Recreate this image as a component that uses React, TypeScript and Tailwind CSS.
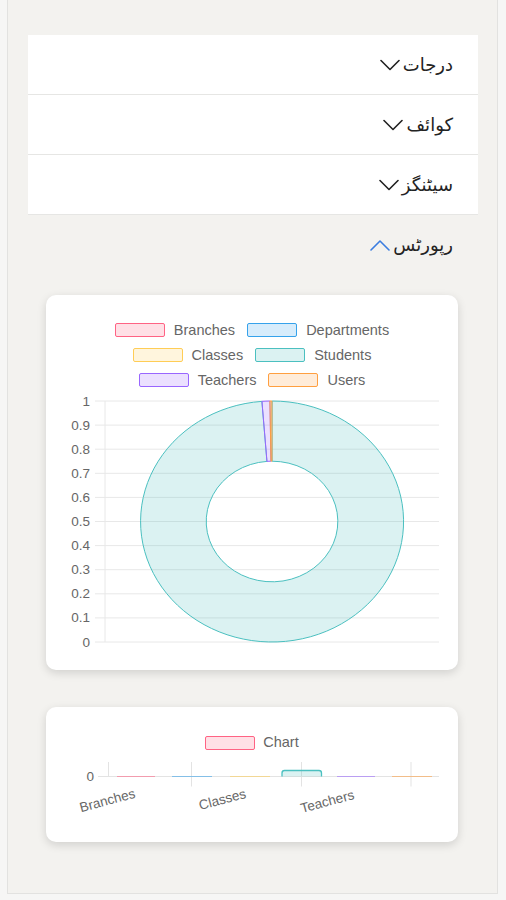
import React from 'react';

const sections = [
  { id: 'grades', label: 'درجات', open: false },
  { id: 'info', label: 'کوائف', open: false },
  { id: 'settings', label: 'سیٹنگز', open: false },
  { id: 'reports', label: 'رپورٹس', open: true },
];

const legendRows = [
  [
    { label: 'Branches', box: 'bg-[#ff638433] border-[#ff6384]' },
    { label: 'Departments', box: 'bg-[#36a2eb33] border-[#36a2eb]' },
  ],
  [
    { label: 'Classes', box: 'bg-[#ffcd5633] border-[#ffcd56]' },
    { label: 'Students', box: 'bg-[#4bc0c033] border-[#4bc0c0]' },
  ],
  [
    { label: 'Teachers', box: 'bg-[#9966ff33] border-[#9966ff]' },
    { label: 'Users', box: 'bg-[#ff9f4033] border-[#ff9f40]' },
  ],
];

const Chevron = ({ up }: { up?: boolean }) => (
  <svg width="20" height="12" viewBox="0 0 20 12" fill="none" className="shrink-0">
    <polyline
      points={up ? '1,11 10,2 19,11' : '1,1.5 10,10.5 19,1.5'}
      stroke={up ? '#3b7de0' : '#222'}
      strokeWidth="1.6"
      strokeLinecap="round"
      strokeLinejoin="round"
    />
  </svg>
);

const arc = (a0: number, a1: number, R: number, r: number) => {
  const p = (a: number, rad: number) => {
    const t = (a * Math.PI) / 180;
    return `${(rad * Math.sin(t)).toFixed(2)} ${(-rad * Math.cos(t)).toFixed(2)}`;
  };
  const large = a1 - a0 > 180 ? 1 : 0;
  return `M ${p(a0, R)} A ${R} ${R} 0 ${large} 1 ${p(a1, R)} L ${p(a1, r)} A ${r} ${r} 0 ${large} 0 ${p(a0, r)} Z`;
};

const slices = [
  { from: 0.05, to: 355.6, fill: 'rgba(75,192,192,0.2)', stroke: 'rgb(75,192,192)' },
  { from: 355.6, to: 359.1, fill: 'rgba(153,102,255,0.2)', stroke: 'rgb(153,102,255)' },
  { from: 359.1, to: 359.95, fill: 'rgba(255,159,64,0.2)', stroke: 'rgb(255,159,64)' },
];

const ticks = ['1', '0.9', '0.8', '0.7', '0.6', '0.5', '0.4', '0.3', '0.2', '0.1', '0'];

const DoughnutCard = () => (
  <div className="h-[375px] rounded-[10px] bg-white pt-[28px] shadow-[0_3px_10px_rgba(0,0,0,0.14)]">
    <div className="flex flex-col items-center font-['Liberation_Sans',Arial,sans-serif] text-[14.5px] text-[#666]">
      {legendRows.map((row, i) => (
        <div key={i} className="flex h-[25px] items-start gap-[12px]">
          {row.map((item) => (
            <div key={item.label} className="flex items-center gap-[9px] leading-[14px]">
              <span className={`h-[14px] w-[50px] rounded-[2px] border-[1.5px] ${item.box}`} />
              <span>{item.label}</span>
            </div>
          ))}
        </div>
      ))}
    </div>
    <svg width="412" height="265" viewBox="0 0 412 265" className="-mt-[5px] block">
      {ticks.map((t, i) => {
        const y = 8 + i * 24.1;
        return (
          <g key={t}>
            <line x1="49" x2="393" y1={y} y2={y} stroke="#e8e8e8" strokeWidth="1" />
            <text
              x="44"
              y={y + 4.5}
              textAnchor="end"
              fontSize="13.5"
              fill="#666"
              fontFamily="Liberation Sans, Arial, sans-serif"
            >
              {t}
            </text>
          </g>
        );
      })}
      <line x1="59" x2="59" y1="8" y2="249" stroke="#e8e8e8" strokeWidth="1" />
      <g transform="translate(226 128.5) scale(1.0913 1)">
        {slices.map((s, i) => (
          <path
            key={i}
            d={arc(s.from, s.to, 120.5, 60.3)}
            fill={s.fill}
            stroke={s.stroke}
            strokeWidth="1"
            vectorEffect="non-scaling-stroke"
          />
        ))}
      </g>
    </svg>
  </div>
);

const bars = [
  { x1: 117, x2: 155, color: '#ff6384' },
  { x1: 172, x2: 212, color: '#36a2eb' },
  { x1: 230, x2: 270, color: '#ffcd56' },
  { x1: 337, x2: 375, color: '#9966ff' },
  { x1: 392, x2: 432, color: '#ff9f40' },
];

const xLabels = [
  { label: 'Branches', x: 61.5, y: 54 },
  { label: 'Classes', x: 176.5, y: 53 },
  { label: 'Teachers', x: 281.5, y: 55 },
];

const BarCard = () => (
  <div className="h-[135px] rounded-[10px] bg-white pt-[28px] shadow-[0_3px_10px_rgba(0,0,0,0.14)]">
    <div className="flex h-[16px] items-center justify-center gap-[8px] font-['Liberation_Sans',Arial,sans-serif] text-[14.5px] text-[#666]">
      <span className="h-[14px] w-[50px] rounded-[2px] border-[1.5px] border-[#ff6384] bg-[#ff638433]" />
      <span>Chart</span>
    </div>
    <svg width="412" height="91" viewBox="0 0 412 91" className="block">
      <line x1="52" x2="393" y1="25.5" y2="25.5" stroke="#e3e3e3" strokeWidth="1" />
      <line x1="62.5" x2="62.5" y1="11" y2="25.5" stroke="#e3e3e3" strokeWidth="1" />
      {[145.5, 255.5, 365].map((x) => (
        <line key={x} x1={x} x2={x} y1="11" y2="35.5" stroke="#e3e3e3" strokeWidth="1" />
      ))}
      <text x="48" y="30" textAnchor="end" fontSize="13.5" fill="#666" fontFamily="Liberation Sans, Arial, sans-serif">
        0
      </text>
      {bars.map((b) => (
        <line
          key={b.x1}
          x1={b.x1 - 46}
          x2={b.x2 - 46}
          y1="25.5"
          y2="25.5"
          stroke={b.color}
          strokeOpacity="0.55"
          strokeWidth="1"
        />
      ))}
      <path
        d="M 236 25.5 L 236 22 Q 236 19.5 238.5 19.5 L 273 19.5 Q 275.5 19.5 275.5 22 L 275.5 25.5"
        fill="rgba(75,192,192,0.2)"
        stroke="rgb(75,192,192)"
        strokeWidth="1.3"
      />
      {xLabels.map((l) => (
        <text
          key={l.label}
          x={l.x}
          y={l.y}
          textAnchor="middle"
          fontSize="13.5"
          fill="#666"
          fontFamily="Liberation Sans, Arial, sans-serif"
          transform={`rotate(-15 ${l.x} ${l.y - 4})`}
        >
          {l.label}
        </text>
      ))}
    </svg>
  </div>
);

export default function App() {
  return (
    <div className="min-h-[900px] bg-[#f6f6f5] pl-[7px] pr-[8px]">
      <div className="h-[894px] border-x border-b border-[#e2e2e0] bg-[#f3f2ef] pl-[20px] pr-[19px] pt-[35px]">
        <div dir="rtl" className="font-['DejaVu_Sans',sans-serif] text-[18px] text-[#232323]">
          {sections.map((s) => (
            <div
              key={s.id}
              className={`flex h-[60px] items-center gap-[3px] pr-[25px] ${
                s.open ? '' : 'border-b border-[#e6e6e4] bg-white'
              }`}
            >
              <span className="leading-none">{s.label}</span>
              <Chevron up={s.open} />
            </div>
          ))}
        </div>
        <div className="flex flex-col gap-[37px] pl-[18px] pr-[20px] pt-[20px]">
          <DoughnutCard />
          <BarCard />
        </div>
      </div>
    </div>
  );
}
